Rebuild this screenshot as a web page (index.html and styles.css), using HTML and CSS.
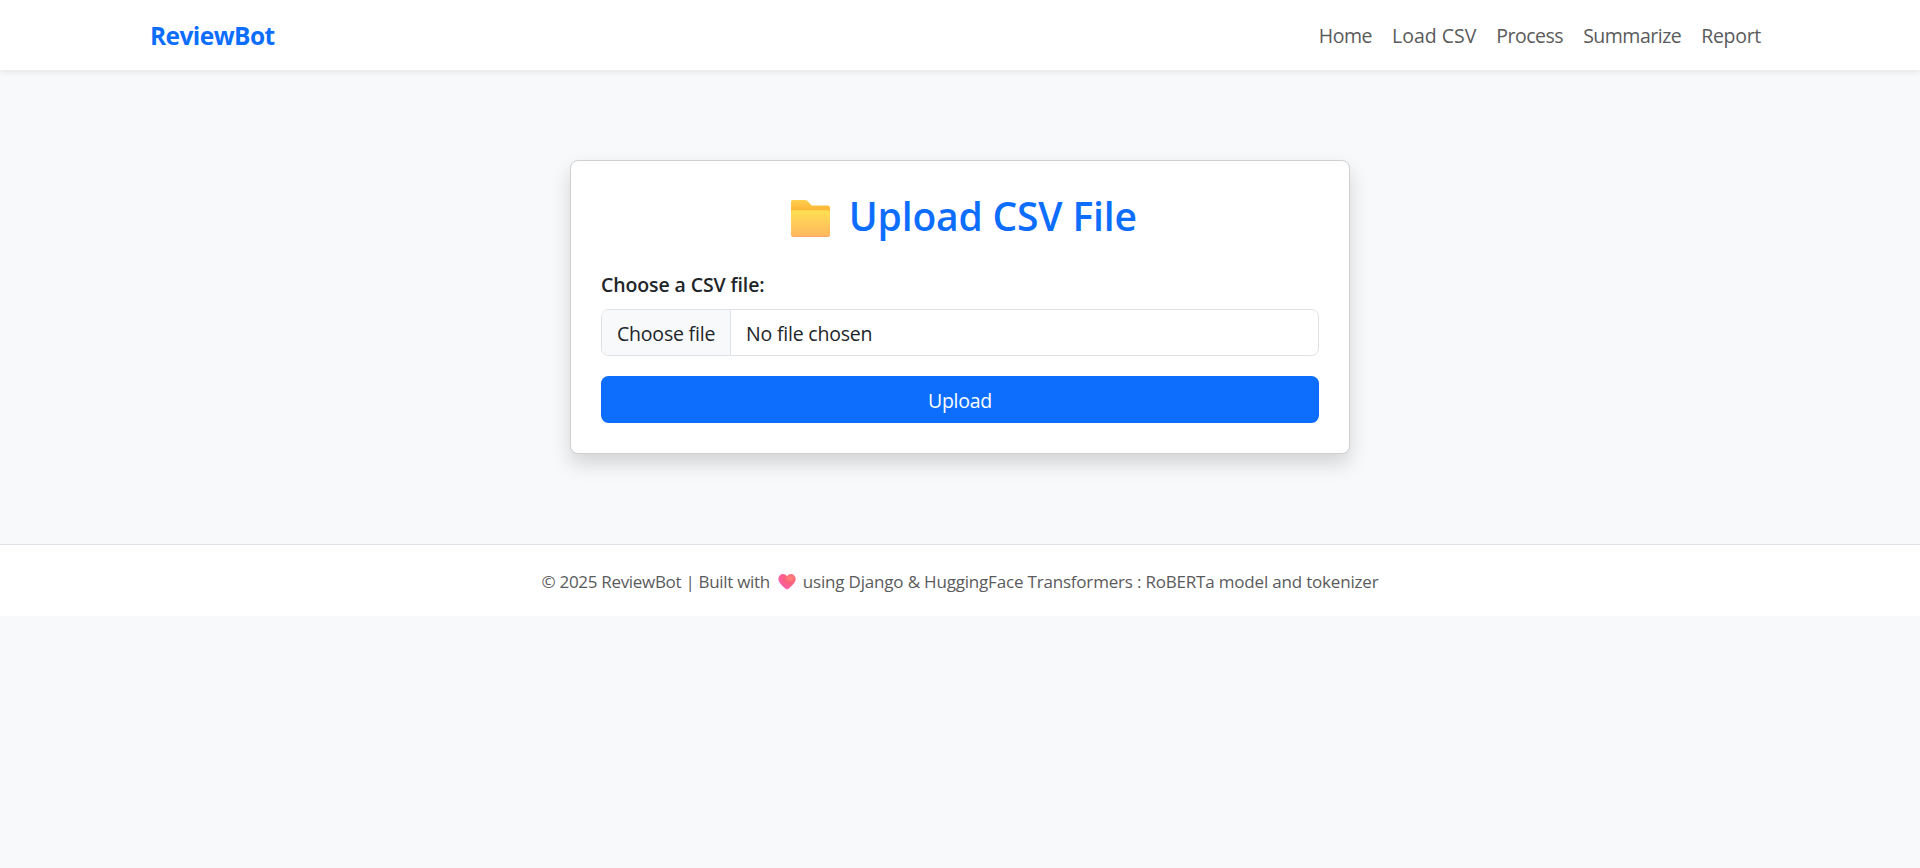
FILE: index.html
```html
<!DOCTYPE html>
<html lang="en">
<head>
<meta charset="utf-8">
<title>Upload CSV</title>
<link rel="stylesheet" href="styles.css">
</head>
<body>
<nav class="navbar">
  <div class="container">
    <a class="brand">ReviewBot</a>
    <div class="links">
      <a class="link">Home</a><a class="link link-load">Load CSV</a><a class="link">Process</a><a class="link">Summarize</a><a class="link link-report">Report</a>
    </div>
  </div>
</nav>
<main class="main">
  <section class="card">
    <h2 class="title">
      <svg class="folder" viewBox="0 0 40 38"><defs>
        <linearGradient id="back" x1="0" y1="0" x2="0" y2="1"><stop offset="0" stop-color="#ffcf4e"/><stop offset=".5" stop-color="#fdb636"/></linearGradient>
        <linearGradient id="front" x1="0" y1="0" x2="0" y2="1"><stop offset="0" stop-color="#ffe052"/><stop offset=".94" stop-color="#ffb85f"/><stop offset="1" stop-color="#ffa070"/></linearGradient></defs>
        <path fill="url(#back)" d="M0 2Q0 0 2 0H14Q15.500 0 16.500 1L20 4.700Q21 5.600 22.500 5.600H37Q39 5.600 39 7.600V20H0Z"/>
        <path fill="url(#front)" d="M0 12Q0 10.300 1.700 10.300H37.300Q39 10.300 39 12V35Q39 37 37 37H2Q0 37 0 35Z"/>
      </svg><span class="title-text">Upload CSV File</span>
    </h2>
    <div class="label">Choose a CSV file:</div>
    <div class="file"><div class="file-btn">Choose file</div><div class="file-name">No file chosen</div></div>
    <button class="upload">Upload</button>
  </section>
</main>
<footer class="footer">
  <span class="credit">© 2025 ReviewBot | Built with</span>
  <svg class="heart" viewBox="0 0 18 16"><defs><radialGradient id="love" cx=".7" cy=".25" r=".8"><stop offset="0" stop-color="#ff8678"/><stop offset=".45" stop-color="#f9607e"/><stop offset="1" stop-color="#ff5fb4"/></radialGradient></defs>
  <path fill="url(#love)" d="M9 2.200C10.800-.2 14-.5 16 1.200C18.200 3.200 18 6.400 16.300 8.700C14.500 11.200 12.500 13 10.200 14.900Q9 15.800 7.800 14.900C5.500 13 3.500 11.200 1.700 8.700C0 6.400-.2 3.200 2 1.200C4-.5 7.200-.2 9 2.200Z"/></svg>
  <span class="stack">using Django &amp; HuggingFace Transformers : RoBERTa model and tokenizer</span>
</footer>
</body>
</html>
```
FILE: styles.css
```css
* { box-sizing: border-box; }
body { margin: 0; background: #f8f9fa; color: #212529; font: 19.5px/30px "Open Sans", "Noto Sans", sans-serif; }
.navbar { height: 70px; background: #fff; box-shadow: 0 2.5px 5px rgba(0, 0, 0, .075); display: flex; justify-content: center; }
.container { width: 1620px; padding-top: 1px; display: flex; align-items: center; justify-content: space-between; }
.brand { color: #0d6efd; font-size: 24.5px; font-weight: 700; letter-spacing: -.58px; }
.links { display: flex; gap: 20px; padding-right: 9px; color: #5a5b5c; }
.link { letter-spacing: -.5px; }
.link-load { letter-spacing: 0; }
.link-report { letter-spacing: -.3px; }
.main { padding: 90px 0; display: flex; justify-content: center; }
.card { width: 780px; height: 294px; padding: 30px; border: 1px solid #cfd0d1; border-radius: 8px; background: #fff; box-shadow: 0 10px 20px rgba(0, 0, 0, .15); }
.title { margin: 0 0 31px; height: 48px; display: flex; align-items: center; justify-content: center; gap: 17.5px; font-size: 39px; font-weight: 600; color: #0d6efd; letter-spacing: -.18px; }
.folder { width: 40px; height: 38px; margin: 8px 0 0 8px; }
.title-text { padding-top: 1px; }
.label { font-weight: 600; letter-spacing: -.11px; margin-bottom: 9px; }
.file { height: 47px; display: flex; border: 1px solid #dee2e6; border-radius: 7.5px; overflow: hidden; letter-spacing: -.2px; margin-bottom: 20px; }
.file-btn { width: 129px; padding: 9px 0 0 15px; background: #f8f9fa; border-right: 1px solid #dee2e6; }
.file-name { padding: 9px 15px 0; }
.upload { width: 100%; height: 47px; padding: 3px 0 0; border: 0; border-radius: 7.5px; background: #0d6efd; color: #fff; font: inherit; letter-spacing: -.25px; }
.footer { height: 72px; padding-top: 2px; border-top: 1px solid #dee2e6; background: #fff; display: flex; align-items: center; justify-content: center; font-size: 17px; color: #5a5b5c; }
.credit { letter-spacing: -.31px; }
.heart { width: 18px; height: 16px; margin: 0 7px 0 8px; }
.stack { letter-spacing: -.19px; }
```
